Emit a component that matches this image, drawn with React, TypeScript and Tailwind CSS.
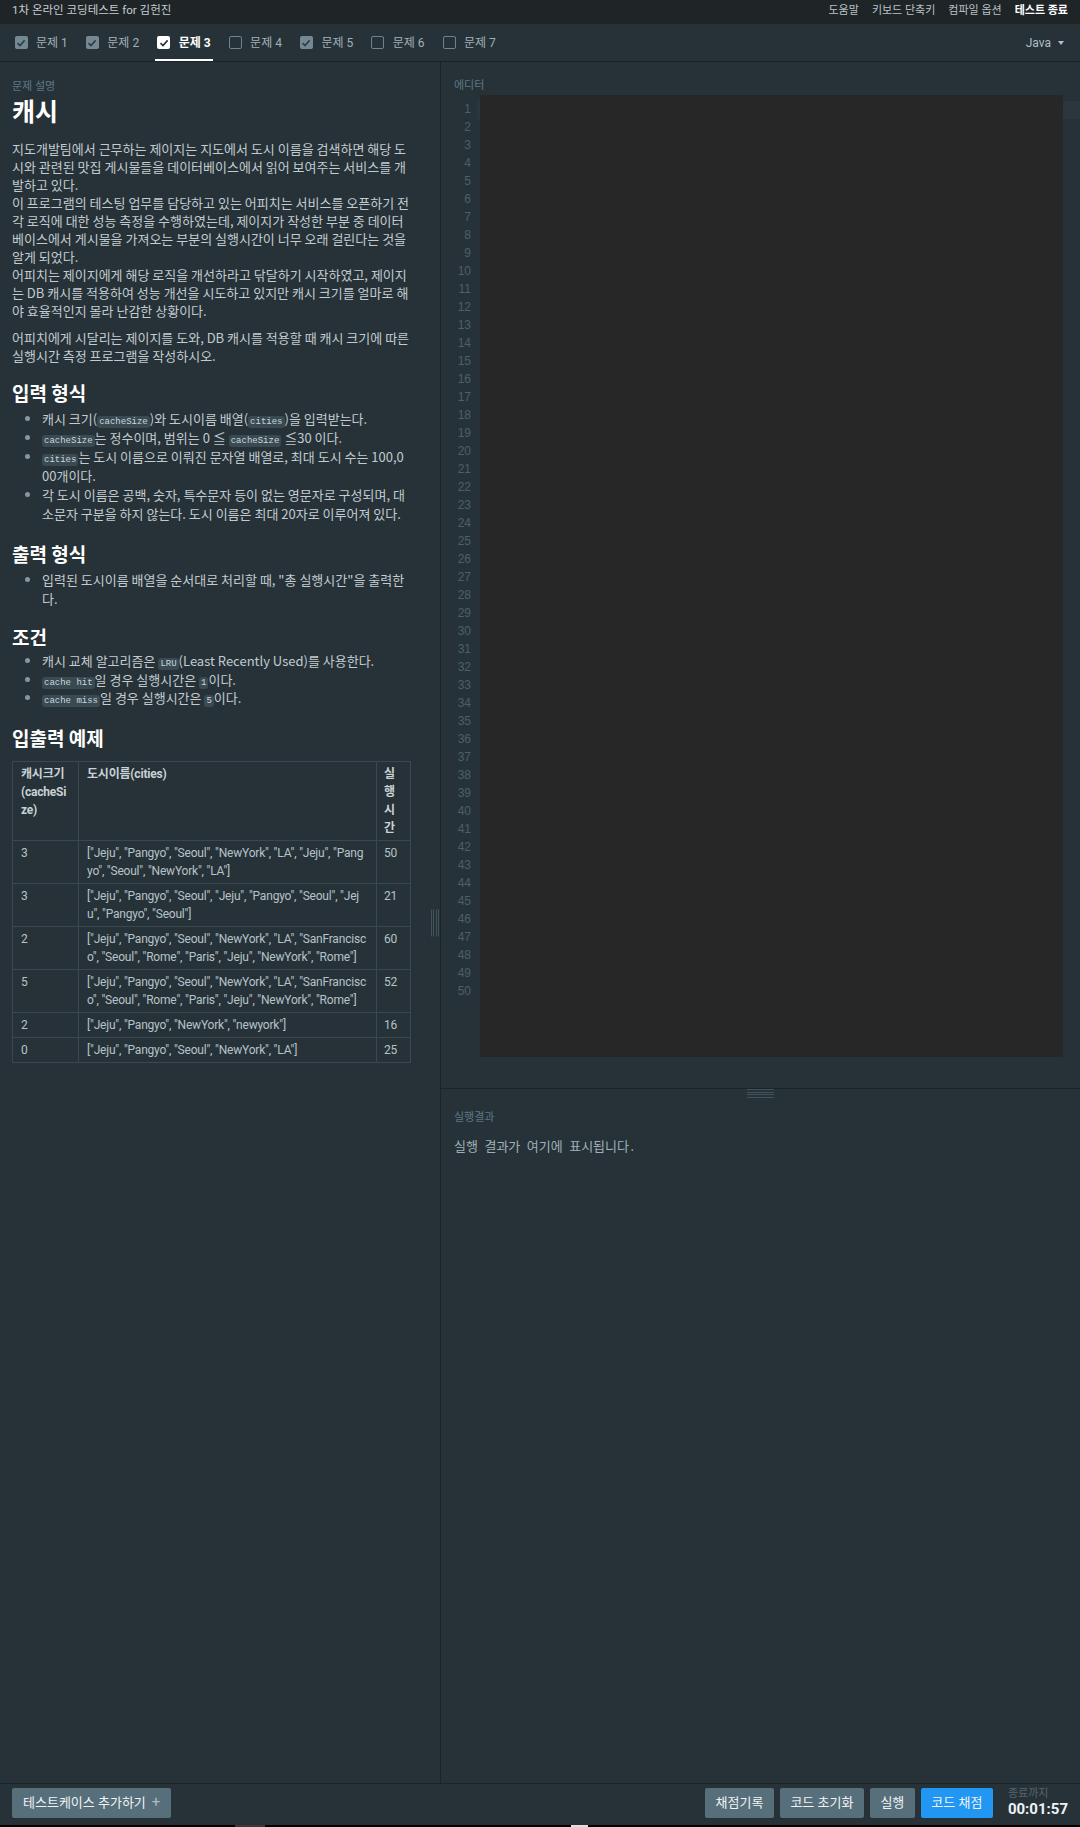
import React from "react";

const Chip = ({ children }: { children: React.ReactNode }) => (
  <code className="rounded-[3px] bg-[#3a4a53] px-[2px] py-[1px] font-['Liberation_Mono',monospace] text-[9px] leading-none text-[#cdd7dc]">
    {children}
  </code>
);

const Check = ({ state }: { state: "active" | "checked" | "empty" }) => {
  if (state === "empty")
    return <span className="block h-[13px] w-[13px] rounded-[2px] border-[1.5px] border-[#6e838d]" />;
  const bg = state === "active" ? "bg-white" : "bg-[#748993]";
  const stroke = state === "active" ? "#263238" : "#2f3d44";
  return (
    <span className={`flex h-[13px] w-[13px] items-center justify-center rounded-[2px] ${bg}`}>
      <svg width="10" height="10" viewBox="0 0 10 10">
        <path d="M1.5 5.2 L4 7.6 L8.6 2.4" fill="none" stroke={stroke} strokeWidth="1.6" />
      </svg>
    </span>
  );
};

const tabs: { n: number; s: "active" | "checked" | "empty" }[] = [
  { n: 1, s: "checked" },
  { n: 2, s: "checked" },
  { n: 3, s: "active" },
  { n: 4, s: "empty" },
  { n: 5, s: "checked" },
  { n: 6, s: "empty" },
  { n: 7, s: "empty" },
];

const rows: [string, string, string][] = [
  ["3", '["Jeju", "Pangyo", "Seoul", "NewYork", "LA", "Jeju", "Pangyo", "Seoul", "NewYork", "LA"]', "50"],
  ["3", '["Jeju", "Pangyo", "Seoul", "Jeju", "Pangyo", "Seoul", "Jeju", "Pangyo", "Seoul"]', "21"],
  ["2", '["Jeju", "Pangyo", "Seoul", "NewYork", "LA", "SanFrancisco", "Seoul", "Rome", "Paris", "Jeju", "NewYork", "Rome"]', "60"],
  ["5", '["Jeju", "Pangyo", "Seoul", "NewYork", "LA", "SanFrancisco", "Seoul", "Rome", "Paris", "Jeju", "NewYork", "Rome"]', "52"],
  ["2", '["Jeju", "Pangyo", "NewYork", "newyork"]', "16"],
  ["0", '["Jeju", "Pangyo", "Seoul", "NewYork", "LA"]', "25"],
];

const lineNums = Array.from({ length: 50 }, (_, i) => i + 1);

export default function App() {
  return (
    <div className="flex h-[1827px] w-[1080px] flex-col overflow-hidden bg-[#263238] font-[Roboto,'Noto_Sans_CJK_KR',sans-serif]">
      {/* top bar */}
      <div className="flex h-[24px] items-center justify-between bg-[#1f2427] pb-[2px] pl-[12px] pr-[12px] text-[11px]">
        <span className="text-[11.5px] text-[#c5cdd1]">1차 온라인 코딩테스트 for 김헌진</span>
        <div className="flex gap-[13px] text-[#b8c2c7]">
          <span>도움말</span>
          <span>키보드 단축키</span>
          <span>컴파일 옵션</span>
          <span className="font-bold text-white">테스트 종료</span>
        </div>
      </div>

      {/* tab bar */}
      <div className="flex h-[38px] items-stretch justify-between border-b border-[#1b2327] bg-[#263238]">
        <div className="flex gap-[14px] pl-[12.5px]">
          {tabs.map((t) => (
            <div
              key={t.n}
              className={`flex items-center gap-[8.5px] border-b-2 px-[2px] pt-[2px] text-[12px] ${
                t.s === "active" ? "border-white font-bold text-white" : "border-transparent text-[#a2b0b7]"
              }`}
            >
              <Check state={t.s} />
              <span>문제 {t.n}</span>
            </div>
          ))}
        </div>
        <div className="flex items-center gap-[7px] pr-[16px] text-[12px] text-[#b0bec5]">
          <span>Java</span>
          <span className="h-0 w-0 border-x-[3.5px] border-t-[4px] border-x-transparent border-t-[#b0bec5]" />
        </div>
      </div>

      {/* main */}
      <div className="flex h-[1721px]">
        {/* left panel */}
        <div className="relative w-[441px] shrink-0 overflow-hidden border-r border-[#1b2327]">
          <div className="pl-[12px] pr-[30px] pt-[18px]">
            <div className="text-[11px] leading-[14px] text-[#5d7884]">문제 설명</div>
            <h1 className="mt-[4px] text-[25px] font-bold leading-[30px] text-white">캐시</h1>
            <div className="break-all font-['Noto_Sans_CJK_KR',sans-serif] text-[13px] leading-[18px] text-[#c2cbd0]">
              <p className="mt-[12px]">
                지도개발팀에서 근무하는 제이지는 지도에서 도시 이름을 검색하면 해당 도시와 관련된 맛집 게시물들을 데이터베이스에서 읽어 보여주는 서비스를 개발하고 있다.
                <br />
                이 프로그램의 테스팅 업무를 담당하고 있는 어피치는 서비스를 오픈하기 전 각 로직에 대한 성능 측정을 수행하였는데, 제이지가 작성한 부분 중 데이터베이스에서 게시물을 가져오는 부분의 실행시간이 너무 오래 걸린다는 것을 알게 되었다.
                <br />
                어피치는 제이지에게 해당 로직을 개선하라고 닦달하기 시작하였고, 제이지는 DB 캐시를 적용하여 성능 개선을 시도하고 있지만 캐시 크기를 얼마로 해야 효율적인지 몰라 난감한 상황이다.
              </p>
              <p className="mt-[9px]">
                어피치에게 시달리는 제이지를 도와, DB 캐시를 적용할 때 캐시 크기에 따른 실행시간 측정 프로그램을 작성하시오.
              </p>

              <h2 className="mb-[3px] mt-[15px] text-[19px] font-bold leading-[26px] text-white">입력 형식</h2>
              <ul className="list-disc pl-[30px] leading-[19px] marker:text-[#8796a0]">
                <li>
                  캐시 크기(<Chip>cacheSize</Chip>)와 도시이름 배열(<Chip>cities</Chip>)을 입력받는다.
                </li>
                <li>
                  <Chip>cacheSize</Chip>는 정수이며, 범위는 0 ≦ <Chip>cacheSize</Chip> ≦30 이다.
                </li>
                <li>
                  <Chip>cities</Chip>는 도시 이름으로 이뤄진 문자열 배열로, 최대 도시 수는 100,000개이다.
                </li>
                <li>각 도시 이름은 공백, 숫자, 특수문자 등이 없는 영문자로 구성되며, 대소문자 구분을 하지 않는다. 도시 이름은 최대 20자로 이루어져 있다.</li>
              </ul>

              <h2 className="mb-[3px] mt-[18px] text-[19px] font-bold leading-[26px] text-white">출력 형식</h2>
              <ul className="list-disc pl-[30px] leading-[19px] marker:text-[#8796a0]">
                <li>입력된 도시이름 배열을 순서대로 처리할 때, "총 실행시간"을 출력한다.</li>
              </ul>

              <h2 className="mb-[2px] mt-[16px] text-[19px] font-bold leading-[26px] text-white">조건</h2>
              <ul className="list-disc pl-[30px] leading-[18.5px] marker:text-[#8796a0]">
                <li>
                  캐시 교체 알고리즘은 <Chip>LRU</Chip>(Least Recently Used)를 사용한다.
                </li>
                <li>
                  <Chip>cache hit</Chip>일 경우 실행시간은 <Chip>1</Chip>이다.
                </li>
                <li>
                  <Chip>cache miss</Chip>일 경우 실행시간은 <Chip>5</Chip>이다.
                </li>
              </ul>

              <h2 className="mb-[10px] mt-[17.5px] text-[19px] font-bold leading-[26px] text-white">입출력 예제</h2>
              <table className="w-[398px] table-fixed border-collapse break-all font-[Roboto,'Noto_Sans_CJK_KR',sans-serif] text-[12px] leading-[18px] tracking-[-0.2px]">
                <colgroup>
                  <col className="w-[66px]" />
                  <col className="w-[298px]" />
                  <col className="w-[34px]" />
                </colgroup>
                <thead>
                  <tr className="text-[#c9d1d5]">
                    <th className="border border-[#3a4951] px-[8px] py-[3px] text-left align-top font-bold">
                      캐시크기
                      <br />
                      (cacheSize)
                    </th>
                    <th className="border border-[#3a4951] px-[8px] py-[3px] text-left align-top font-bold">도시이름(cities)</th>
                    <th className="border border-[#3a4951] px-[7px] py-[3px] text-left align-top font-bold">실행시간</th>
                  </tr>
                </thead>
                <tbody className="text-[#b7c2c8]">
                  {rows.map((r, i) => (
                    <tr key={i}>
                      <td className="border border-[#3a4951] px-[8px] py-[3px] align-top">{r[0]}</td>
                      <td className="border border-[#3a4951] px-[8px] py-[3px] align-top">{r[1]}</td>
                      <td className="border border-[#3a4951] px-[7px] py-[3px] align-top">{r[2]}</td>
                    </tr>
                  ))}
                </tbody>
              </table>
            </div>
          </div>
          {/* vertical grip */}
          <div className="absolute right-[1px] top-1/2 flex h-[27px] w-[8px] -translate-y-1/2 justify-between">
            <span className="w-px bg-[#425259]" />
            <span className="w-px bg-[#425259]" />
            <span className="w-px bg-[#425259]" />
            <span className="w-px bg-[#425259]" />
          </div>
        </div>

        {/* right panel */}
        <div className="flex flex-1 flex-col">
          {/* editor */}
          <div className="h-[1027px] border-b border-[#1b2327]">
            <div className="pl-[13px] pt-[17px] text-[11px] leading-[14px] text-[#5d7884]">에디터</div>
            <div className="relative mt-[2px] flex h-[962px]">
              <div className="absolute left-[36px] right-0 top-[6px] h-[18px] bg-[#2c373d]" />
              <div className="relative w-[39px] shrink-0 pr-[9px] pt-[5px] text-right font-['Liberation_Sans_Narrow','Liberation_Sans',sans-serif] text-[12px] leading-[18px] text-[#4b606a]">
                {lineNums.map((n) => (
                  <div key={n} className="h-[18px]">
                    {n}
                  </div>
                ))}
              </div>
              <div className="relative w-[583px] bg-[#272727]" />
            </div>
          </div>
          {/* output */}
          <div className="flex-1">
            <div className="mx-auto flex h-[10px] w-[27px] flex-col justify-between pb-[1px]">
              <span className="h-px bg-[#425259]" />
              <span className="h-px bg-[#425259]" />
              <span className="h-px bg-[#425259]" />
              <span className="h-px bg-[#425259]" />
            </div>
            <div className="pl-[13px] pt-[12px] text-[11px] leading-[14px] text-[#5d7884]">실행결과</div>
            <div className="pl-[13px] pt-[14px] font-['Noto_Sans_Mono_CJK_KR','Liberation_Mono','Noto_Sans_CJK_KR',monospace] text-[13px] leading-[14px] text-[#9fb0b9]">
              실행 결과가 여기에 표시됩니다.
            </div>
          </div>
        </div>
      </div>

      {/* bottom bar */}
      <div className="flex h-[42px] items-center justify-between border-t border-[#1b2327] pb-[5px] pl-[12px] pr-[12px] pt-[1px]">
        <button className="flex h-[30px] items-center gap-[6px] rounded-[2px] bg-[#566f7a] px-[11px] text-[13px] text-[#f1f4f5]">
          테스트케이스 추가하기 <span className="text-[15px] text-[#aebcc3]">+</span>
        </button>
        <div className="flex items-center">
          <div className="flex gap-[6px] text-[13px] text-[#f1f4f5]">
            <button className="h-[30px] rounded-[2px] bg-[#566f7a] px-[10.5px]">채점기록</button>
            <button className="h-[30px] rounded-[2px] bg-[#566f7a] px-[10.5px]">코드 초기화</button>
            <button className="h-[30px] rounded-[2px] bg-[#566f7a] px-[10.5px]">실행</button>
            <button className="h-[30px] rounded-[2px] bg-[#2196f3] px-[10.5px]">코드 채점</button>
          </div>
          <div className="ml-[15px] flex flex-col">
            <span className="text-[11px] leading-[13px] text-[#56666e]">종료까지</span>
            <span className="text-[15px] font-bold leading-[18px] text-[#eef2f4]">00:01:57</span>
          </div>
        </div>
      </div>
      <div className="flex h-[2px] bg-black">
        <span className="ml-[235px] w-[30px] bg-[#3a3a3a]" />
        <span className="ml-[306px] w-[17px] bg-[#e0e0e0]" />
      </div>
    </div>
  );
}
